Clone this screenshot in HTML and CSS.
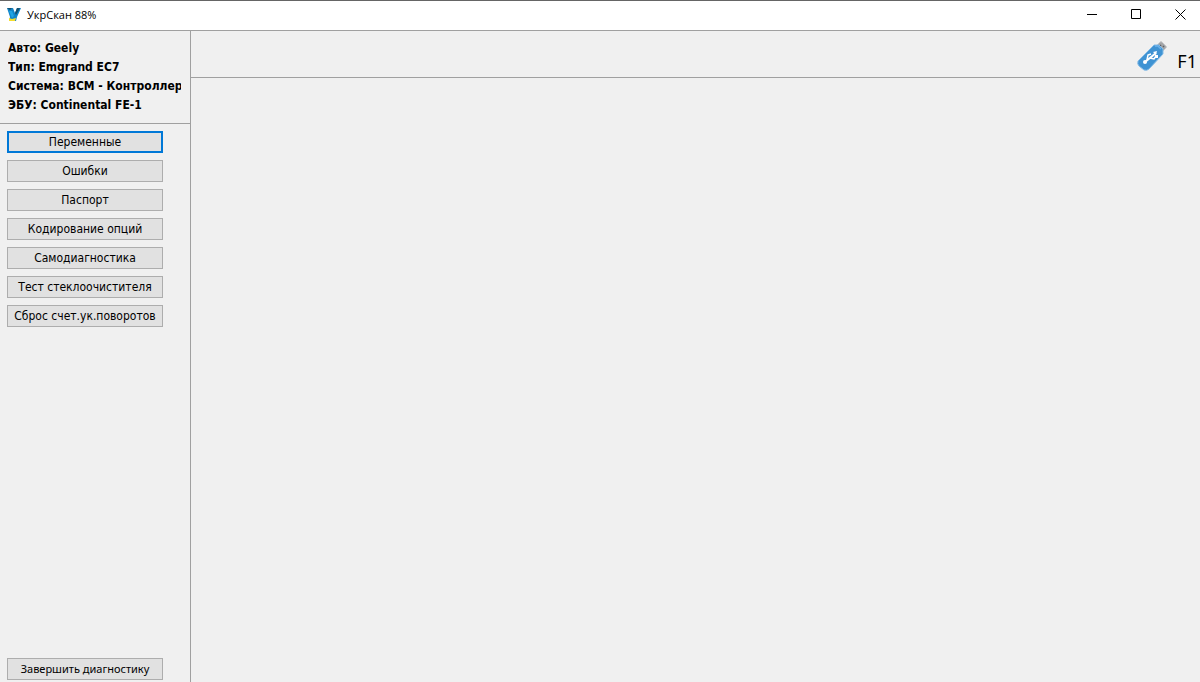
FILE: index.html
```html
<!DOCTYPE html>
<html lang="ru">
<head>
    <meta charset="UTF-8">
    <meta name="viewport" content="width=device-width, initial-scale=1.0">
    <title>УкрСкан</title>
    <link rel="stylesheet" href="styles.css">
</head>
<body>
    <header class="titlebar">
        <svg class="logo" viewBox="0 0 14 13" width="14" height="13" aria-hidden="true">
            <path d="M0 0h6l2 5 2-5h4l-4 9-1 4H2l1-4z" fill="#1285c9"/>
            <path d="M0 0h5l-2 2zM8 5l2-5h3l-4 7z" fill="#14506f"/>
            <path d="M2 3h3l2 5-2 2z" fill="#20a4e4"/>
            <path d="M2 10l3 1 4-1-1 3H2z" fill="#f4dc2c"/>
        </svg>
        <span class="title">УкрСкан 88%</span>
        <div class="controls">
            <button type="button" aria-label="Свернуть">
                <svg viewBox="0 0 11 11" width="11" height="11"><path d="M0 5.5h10"/></svg>
            </button>
            <button type="button" aria-label="Развернуть">
                <svg viewBox="0 0 11 11" width="11" height="11"><path d="M.5.5h9v9h-9z"/></svg>
            </button>
            <button type="button" aria-label="Закрыть">
                <svg viewBox="0 0 11 11" width="11" height="11"><path d="M.5.5l10 10M10.5.5l-10 10"/></svg>
            </button>
        </div>
    </header>
    <div class="wrapper">
        <aside class="sidebar">
            <div class="info">
                <p>Авто: Geely</p>
                <p>Тип: Emgrand EC7</p>
                <p>Система: BCM - Контроллер</p>
                <p>ЭБУ: Continental FE-1</p>
            </div>
            <nav class="menu">
                <button type="button" class="active">Переменные</button>
                <button type="button">Ошибки</button>
                <button type="button">Паспорт</button>
                <button type="button">Кодирование опций</button>
                <button type="button">Самодиагностика</button>
                <button type="button">Тест стеклоочистителя</button>
                <button type="button">Сброс счет.ук.поворотов</button>
                <button type="button" class="finish">Завершить диагностику</button>
            </nav>
        </aside>
        <main class="content">
            <div class="toolbar">
                <svg class="usb" viewBox="0 0 30 30" width="30" height="30" role="img" aria-label="USB">
                    <path d="M19 5l4-4q1-1 2 0l4 4q1 1 0 2l-4 4z" fill="#a3a5a8" stroke="#c9cbcd"/>
                    <path d="M23 4l1 1M26 5l1 1" stroke="#5f6266" stroke-width="1.5"/>
                    <path d="M17 4h5l4 4v5L12 28q-2 2-5 1l-5-4q-2-2-1-5z" fill="#3f93d3" stroke="#86bce6"/>
                    <path d="M18 5h3l3 3" fill="none" stroke="#6db2ea" stroke-width="1.5"/>
                    <path d="M8 21L19 12" stroke="#fff" stroke-width="2"/>
                    <path d="M10 19l1-5 3-1M13 17l4 1 2-3" fill="none" stroke="#fff" stroke-width="1.5"/>
                    <path d="M20 10l-1 4-3-3z" fill="#fff"/>
                    <circle cx="8" cy="21" r="2" fill="#fff"/>
                    <path d="M18 14h3v3h-3z" fill="#fff"/>
                </svg>
                <span class="key">F1</span>
            </div>
        </main>
    </div>
</body>
</html>
```
FILE: styles.css
```css
* {
    box-sizing: border-box;
}
body {
    margin: 0;
    min-height: 100vh;
    display: flex;
    flex-direction: column;
    background-color: #f0f0f0;
    color: #000;
    font-family: "DejaVu Sans Condensed", "DejaVu Sans", sans-serif;
    font-size: 12px;
}
button {
    font: inherit;
    color: inherit;
}
.titlebar {
    display: flex;
    align-items: center;
    height: 31px;
    padding-left: 7px;
    background-color: #fff;
    border-top: 1px solid #656565;
    border-bottom: 1px solid #a0a0a0;
}
.logo {
    margin-bottom: 3px;
}
.title {
    margin-left: 6px;
    padding-bottom: 2px;
    font-family: "Open Sans", sans-serif;
    font-size: 11px;
}
.controls {
    display: flex;
    height: 100%;
    margin-left: auto;
}
.controls button {
    display: flex;
    align-items: center;
    justify-content: center;
    width: 44px;
    padding: 0 0 2px 4px;
    border: 0;
    background: none;
}
.controls path {
    fill: none;
    stroke: #000;
}
.wrapper {
    flex: 1;
    display: flex;
}
.sidebar {
    display: flex;
    flex-direction: column;
    width: 191px;
    border-right: 1px solid #a0a0a0;
}
.info {
    padding: 8px 9px 8px 8px;
    border-bottom: 1px solid #a0a0a0;
    font-weight: bold;
    line-height: 19px;
}
.info p {
    margin: 0;
    overflow: hidden;
    white-space: nowrap;
}
.menu {
    flex: 1;
    display: flex;
    flex-direction: column;
    gap: 7px;
    padding: 7px 27px 2px 7px;
}
.menu button {
    height: 22px;
    padding: 0;
    border: 1px solid #adadad;
    background-color: #e1e1e1;
    line-height: 20px;
    white-space: nowrap;
}
.menu .active {
    border: 2px solid #0078d7;
    line-height: 18px;
}
.menu .finish {
    margin-top: auto;
    font-family: "Noto Sans", sans-serif;
    font-size: 11px;
}
.content {
    flex: 1;
}
.toolbar {
    display: flex;
    align-items: flex-end;
    justify-content: flex-end;
    gap: 10px;
    height: 47px;
    padding: 0 3px 6px;
    border-bottom: 1px solid #a0a0a0;
}
.key {
    font-family: "Noto Sans", sans-serif;
    font-size: 18px;
    line-height: 20px;
}
```
